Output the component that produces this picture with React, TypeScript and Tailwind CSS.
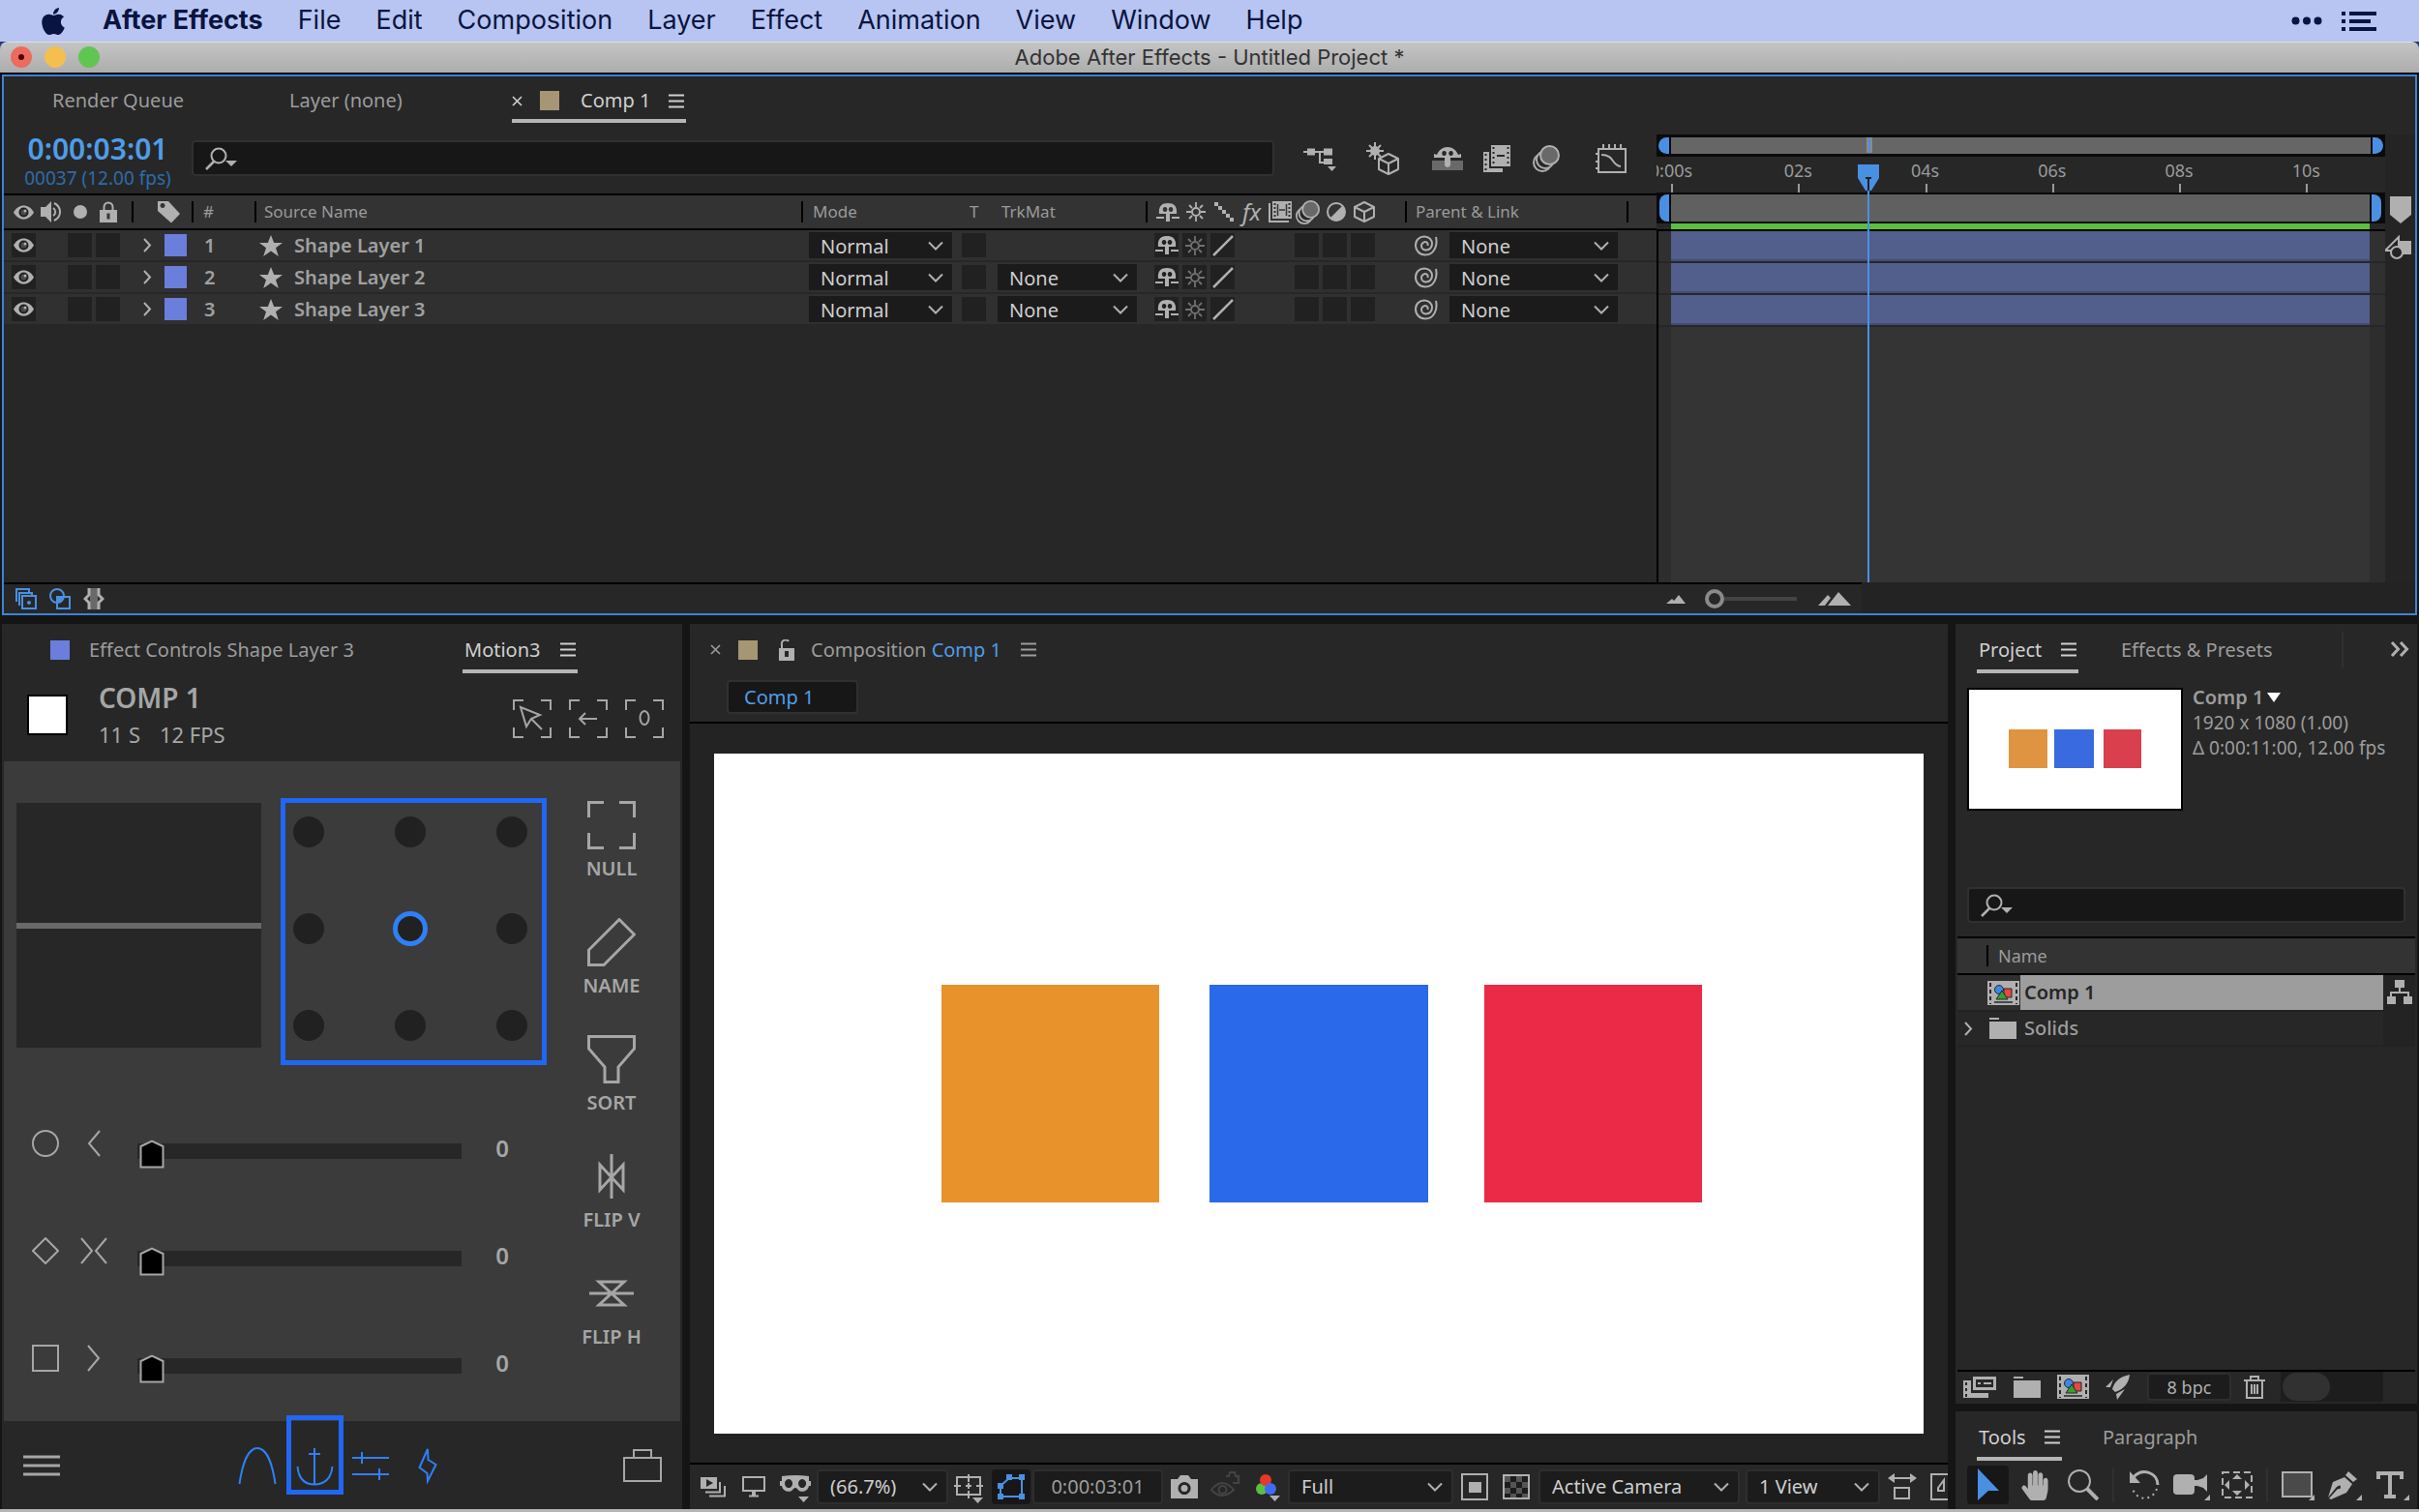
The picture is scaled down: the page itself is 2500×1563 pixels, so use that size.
import type { ReactNode } from 'react';
import { FaApple, FaHandPaper } from 'react-icons/fa';

interface SvgProps {
  w: number;
  h: number;
  className?: string;
  children: ReactNode;
}

function Svg({ w, h, className = '', children }: SvgProps) {
  return (
    <svg
      width={w}
      height={h}
      viewBox={`0 0 ${w} ${h}`}
      fill="none"
      stroke="currentColor"
      strokeWidth="2"
      aria-hidden="true"
      className={`shrink-0 ${className}`}
    >
      {children}
    </svg>
  );
}

/* ---------- icons ---------- */

const Chevron = () => <Svg w={16} h={10}><path d="M1 1.5l7 7 7-7" /></Svg>;
const ChevronRight = () => <Svg w={9} h={15}><path d="M1 1l6 6.5-6 6.5" /></Svg>;
const Burger = () => <Svg w={16} h={15}><path d="M0 1.5h16M0 7.5h16M0 13.5h16" /></Svg>;
const Close = () => <Svg w={11} h={11}><path d="M1 1l9 9M10 1l-9 9" strokeWidth="1.6" /></Svg>;

const Search = () => (
  <Svg w={34} h={24}>
    <circle cx="14" cy="9" r="7.5" />
    <path d="M9 15l-8 8" strokeWidth="2.5" />
    <path d="M21 14h12l-6 6z" fill="currentColor" stroke="none" />
  </Svg>
);

const Eye = () => (
  <Svg w={21} h={17}>
    <path d="M0 8.500C5-1 16-1 21 8.500 16 18 5 18 0 8.500z" fill="currentColor" stroke="none" />
    <circle cx="10.500" cy="8.500" r="5" fill="#212121" stroke="none" />
    <circle cx="10.500" cy="8.500" r="3" fill="#4a4a4a" stroke="none" />
    <circle cx="12" cy="7" r="1.500" fill="currentColor" stroke="none" />
  </Svg>
);

const Speaker = () => (
  <Svg w={24} h={22}>
    <path d="M0 6h5l6-6v22l-6-6H0z" fill="currentColor" stroke="none" />
    <path d="M13 7c3 2 3 6 0 8M14 2c8 4 8 14 0 18" />
  </Svg>
);

const Lock = () => (
  <Svg w={18} h={22}>
    <path d="M4.500 10V6a4.500 4.500 0 0 1 9 0v4" />
    <path d="M0 9h18v13H0z" fill="currentColor" stroke="none" />
    <path d="M9 12.500v6" stroke="#333333" strokeWidth="3" />
  </Svg>
);

const OpenLock = () => (
  <Svg w={18} h={22}>
    <path d="M4 10V5.500a4 4 0 0 1 7-3.500" />
    <path d="M1 9h16v13H1z" fill="currentColor" stroke="none" />
    <path d="M9 12v6" stroke="#272727" strokeWidth="4" />
  </Svg>
);

const Tag = () => (
  <Svg w={24} h={24}>
    <path fillRule="evenodd" d="M0 1h11l12 13-9 9.500L0 11zM5 3a2.500 2.500 0 1 0 .1 0z" fill="currentColor" stroke="none" />
  </Svg>
);

const Star = () => (
  <Svg w={24} h={22}>
    <path d="M12 0l3.200 8H24l-7 5.200 2.800 8.800L12 16.600 4.200 22 7 13.200 0 8h8.800z" fill="currentColor" stroke="none" />
  </Svg>
);

const Shy = () => (
  <Svg w={24} h={21}>
    <path
      fillRule="evenodd"
      d="M3 12C2 4 6 1 12 1s10 3 9 11h-7v8h-4v-8zM9 5a2.300 2.500 0 1 0 .1 0zM15 5a2.300 2.500 0 1 0 .1 0z"
      fill="currentColor"
      stroke="none"
    />
    <path d="M0 16h8M16 16h8" />
  </Svg>
);

const Sun = () => (
  <Svg w={20} h={20}>
    <circle cx="10" cy="10" r="4" />
    <path d="M10 0v5M10 15v5M0 10h5M15 10h5M3 3l3 3M14 14l3 3M17 3l-3 3M6 14l-3 3" strokeWidth="1.800" />
  </Svg>
);

const DottedLine = () => (
  <Svg w={20} h={20}>
    <path d="M0 2h4M4 6h4M8 10h4M12 14h4M16 18h4" strokeWidth="4" />
  </Svg>
);

const Film = () => (
  <Svg w={24} h={22}>
    <path d="M1 2v19h20" />
    <path d="M4 0h20v18H4z" fill="currentColor" stroke="none" />
    <path d="M6.500 2v15M21.500 2v15" stroke="#333333" strokeDasharray="2 2" />
    <path d="M11 9h6M9.500 3v12M18.500 3v12" stroke="#333333" strokeWidth="1.500" />
  </Svg>
);

const Blur = ({ size }: { size: number }) => (
  <svg width={size} height={size} viewBox="0 0 28 28" fill="none" stroke="currentColor" strokeWidth="2" aria-hidden="true">
    <circle cx="10" cy="18" r="9" fill="#272727" />
    <circle cx="13" cy="15" r="9" fill="#272727" />
    <circle cx="17.500" cy="10.500" r="9.500" fill="#696969" />
  </svg>
);

const HalfCircle = () => (
  <Svg w={20} h={20}>
    <circle cx="10" cy="10" r="9" />
    <path d="M16.500 3.500A9 9 0 0 1 3.500 16.500z" fill="currentColor" stroke="none" />
  </Svg>
);

const Cube = () => (
  <Svg w={22} h={22}>
    <path d="M11 1l10 5v10l-10 5-10-5V6zM1 6l10 5 10-5M11 11v10" strokeLinejoin="round" />
  </Svg>
);

const Swirl = () => (
  <Svg w={24} h={22}>
    <path d="M22 2C24 11 20 20.500 11 20.500 5 20.500 1 16 1 10.500 1 5 5 1.500 10 1.500c5 0 8 3.500 8 7.500 0 4-3 6.500-6 6.500-3 0-5-2-5-4.500C7 9 9 7 11 7c2 0 3 1.500 2.500 4" />
  </Svg>
);

const Flow = () => (
  <Svg w={34} h={26}>
    <path d="M0 6h30M17 6v11h6" />
    <path d="M4 2.500h8v7H4zM21 2.500h9v7h-9zM21 13h9v6h-9zM25 21h9l-4.500 5z" fill="currentColor" stroke="none" />
  </Svg>
);

const StarCube = () => (
  <Svg w={34} h={34}>
    <path d="M9 0v18M0 9h18M3 3l12 12M15 3L3 15" />
    <circle cx="9" cy="9" r="5" fill="currentColor" stroke="none" />
    <path d="M23 12l10 5v11l-10 5-10-5V17zM13 17l10 5 10-5M23 22v11" strokeLinejoin="round" />
  </Svg>
);

const ShyAll = () => (
  <Svg w={32} h={26}>
    <path d="M0 15h32v10H0z" fill="#696969" stroke="none" />
    <path
      fillRule="evenodd"
      d="M2 12V8l3 1C7 4 11 1 16 1s9 3 11 8l3-1v4H19v8q-3 4-6 0v-8zM12.500 5a2.300 2.500 0 1 0 .1 0zM19.500 5a2.300 2.500 0 1 0 .1 0z"
      fill="currentColor"
      stroke="none"
    />
  </Svg>
);

const FilmAll = () => (
  <Svg w={28} h={28}>
    <path d="M0 7h6v17h14v4H0z" fill="currentColor" stroke="none" />
    <path d="M8 0h20v22H8z" fill="currentColor" stroke="none" />
    <path d="M10.500 2v19M25.500 2v19M2.500 9v17" stroke="#272727" strokeDasharray="2 3" />
    <path d="M14 11h8" stroke="#272727" />
  </Svg>
);

const Graph = () => (
  <Svg w={32} h={30}>
    <path d="M3 5h28v24H3zM6 11c14 0 10 11 20 12M0 10h3M0 18h3M0 25h3M8 0v5M14 0v5M20 0v5M26 0v5" />
  </Svg>
);

const CompIcon = () => (
  <Svg w={33} h={25}>
    <path d="M0 0h33v25H0z" fill="currentColor" stroke="none" />
    <path d="M3 2v22M30 2v22" stroke="#272727" strokeDasharray="4 3" />
    <path d="M7 22h19" stroke="#272727" strokeWidth="1.500" />
    <path d="M17 8h8v9h-8z" fill="#e8483f" stroke="#272727" strokeWidth="1" />
    <circle cx="12" cy="9" r="4.500" fill="#3f86e8" stroke="#272727" strokeWidth="1" />
    <path d="M9 19l6-9 6 9z" fill="#35a02f" stroke="#272727" strokeWidth="1" />
  </Svg>
);

const Folder = () => (
  <Svg w={28} h={22}>
    <path d="M0 0h10v2H0zM0 4h28v18H0z" fill="currentColor" stroke="none" />
  </Svg>
);

/* ---------- shared pieces ---------- */

function Tab({ children, active = false, className = '' }: { children: ReactNode; active?: boolean; className?: string }) {
  return (
    <button
      type="button"
      className={`flex h-full shrink-0 items-center whitespace-nowrap border-b-4 pt-[6px] ${
        active ? 'border-[#b5b5b5] text-[#d0d0d0]' : 'border-transparent text-[#9c9c9c]'
      } ${className}`}
    >
      {children}
    </button>
  );
}

interface SelectProps {
  label: string;
  value: string;
  className?: string;
}

function Select({ label, value, className = '' }: SelectProps) {
  return (
    <div className={`relative shrink-0 ${className}`}>
      <select aria-label={label} className="h-full w-full appearance-none bg-transparent pl-3 leading-none text-[#cfcfcf]">
        <option>{value}</option>
      </select>
      <span className="pointer-events-none absolute inset-y-0 right-[9px] flex items-center">
        <Chevron />
      </span>
    </div>
  );
}

function SearchBox({ label, className }: { label: string; className: string }) {
  return (
    <div className={`flex h-[37px] items-center rounded border-2 border-[#303030] bg-[#171717] pl-3 ${className}`}>
      <Search />
      <input type="text" aria-label={label} className="min-w-0 flex-1 bg-transparent outline-none" />
    </div>
  );
}

function Cell({ children, blank = false }: { children?: ReactNode; blank?: boolean }) {
  return (
    <span className={`flex h-[25px] w-[25px] shrink-0 items-center justify-center ${blank ? '' : 'bg-[#212121]'}`}>
      {children}
    </span>
  );
}

/* ---------- menu and title ---------- */

const menus = ['File', 'Edit', 'Composition', 'Layer', 'Effect', 'Animation', 'View', 'Window', 'Help'];

function MenuBar() {
  return (
    <nav className="flex h-[43px] items-center gap-9 bg-[#b8c5f2] pl-10 pr-11 font-['Inter',sans-serif] text-[27px] text-[#0a1440]">
      <FaApple className="h-[32px] w-[30px]" />
      <button type="button" className="font-bold">After Effects</button>
      {menus.map((m) => (
        <button type="button" key={m}>{m}</button>
      ))}
      <div className="ml-auto flex items-center gap-5">
        <Svg w={32} h={9}>
          <g fill="currentColor" stroke="none">
            <circle cx="4.500" cy="4.500" r="4" />
            <circle cx="16" cy="4.500" r="4" />
            <circle cx="27.500" cy="4.500" r="4" />
          </g>
        </Svg>
        <Svg w={36} h={20}>
          <path d="M0 2h4M8 2h28M0 10h4M8 10h22M0 18h4M8 18h28" strokeWidth="4" />
        </Svg>
      </div>
    </nav>
  );
}

function TitleBar() {
  return (
    <div className="bg-[#2a3a78]">
      <header className="flex h-8 items-center rounded-t-lg border-t border-[#dedede] bg-linear-to-b from-[#c4c4c4] to-[#adadad] px-[11px] pb-[2px]">
        <div className="flex w-24 gap-[13px]">
          <button type="button" aria-label="Close" className="flex h-[22px] w-[22px] items-center justify-center rounded-full bg-[#ed6a5e]">
            <span className="h-[6px] w-[6px] rounded-full bg-[#4d0000]" />
          </button>
          <button type="button" aria-label="Minimize" className="h-[22px] w-[22px] rounded-full bg-[#f5bf4f]" />
          <button type="button" aria-label="Zoom" className="h-[22px] w-[22px] rounded-full bg-[#61c554]" />
        </div>
        <h1 className="flex-1 text-center font-['Inter',sans-serif] text-[22px] leading-none text-[#333333]">
          Adobe After Effects - Untitled Project *
        </h1>
        <div className="w-24" />
      </header>
    </div>
  );
}

/* ---------- timeline ---------- */

interface Layer {
  id: number;
  name: string;
  trkMat: string | null;
}

const layers: Layer[] = [
  { id: 1, name: 'Shape Layer 1', trkMat: null },
  { id: 2, name: 'Shape Layer 2', trkMat: 'None' },
  { id: 3, name: 'Shape Layer 3', trkMat: 'None' },
];

const ticks = ['0:00s', '02s', '04s', '06s', '08s', '10s'];

function Head({ children, className = '' }: { children?: ReactNode; className?: string }) {
  return (
    <th className={`h-[38px] border-y-2 border-black bg-[#333333] p-0 text-left font-normal ${className}`}>
      <div className="relative flex items-center">{children}</div>
    </th>
  );
}

const Divider = () => <span className="absolute left-0 h-[22px] w-[2px] bg-black" />;

function LayerTable() {
  return (
    <table className="w-full table-fixed border-separate border-spacing-0">
      <colgroup>
        <col className="w-[132px]" />
        <col className="w-[62px]" />
        <col className="w-[65px]" />
        <col />
        <col className="w-[160px]" />
        <col className="w-[35px]" />
        <col className="w-[161px]" />
        <col className="w-[268px]" />
        <col className="w-[229px]" />
        <col className="w-[31px]" />
      </colgroup>
      <thead className="text-[17px] text-[#9a9a9a]">
        <tr>
          <Head>
            <div className="flex gap-1 pl-2 text-[#b0b0b0]">
              <Cell blank><Eye /></Cell>
              <Cell blank><Speaker /></Cell>
              <Cell blank><span className="h-[14px] w-[14px] rounded-full bg-[#b0b0b0]" /></Cell>
              <Cell blank><Lock /></Cell>
            </div>
          </Head>
          <Head>
            <Divider />
            <span className="pl-[27px] text-[#b0b0b0]"><Tag /></span>
          </Head>
          <Head><Divider /><span className="pl-3">#</span></Head>
          <Head><Divider /><span className="pl-[10px]">Source Name</span></Head>
          <Head><Divider /><span className="pl-3">Mode</span></Head>
          <Head><span className="pl-[14px]">T</span></Head>
          <Head><span className="pl-3">TrkMat</span></Head>
          <Head>
            <Divider />
            <div className="flex gap-1 pl-[10px] text-[#b0b0b0]">
              <Cell blank><Shy /></Cell>
              <Cell blank><Sun /></Cell>
              <Cell blank><DottedLine /></Cell>
              <Cell blank><i className="text-[24px] leading-none">fx</i></Cell>
              <Cell blank><Film /></Cell>
              <Cell blank><Blur size={25} /></Cell>
              <Cell blank><HalfCircle /></Cell>
              <Cell blank><Cube /></Cell>
            </div>
          </Head>
          <Head><Divider /><span className="pl-[11px]">Parent &amp; Link</span></Head>
          <Head><Divider /></Head>
        </tr>
      </thead>
      <tbody className="text-[20px] text-[#b0b0b0] [&_td]:h-[33px] [&_td]:border-b-2 [&_td]:border-[#272727] [&_td]:bg-[#303030] [&_td]:p-0">
        {layers.map((layer) => (
          <tr key={layer.id}>
            <td>
              <div className="flex gap-1 pl-2">
                <Cell><Eye /></Cell>
                <Cell blank />
                <Cell />
                <Cell />
              </div>
            </td>
            <td>
              <div className="flex items-center gap-[13px] pl-3">
                <ChevronRight />
                <span className="h-[23px] w-[23px] bg-[#6b7edb]" />
              </div>
            </td>
            <td className="pl-[13px]! font-semibold leading-none text-[#a0a0a0]">{layer.id}</td>
            <td>
              <div className="flex items-center gap-3 pl-[5px] font-semibold leading-none text-[#a0a0a0]">
                <span className="text-[#b0b0b0]"><Star /></span>
                {layer.name}
              </div>
            </td>
            <td className="pl-2!">
              <Select label={`Mode of ${layer.name}`} value="Normal" className="h-[27px] w-[148px] bg-[#1b1b1b]" />
            </td>
            <td className="pl-[6px]!"><Cell /></td>
            <td className="pl-2!">
              {layer.trkMat && (
                <Select label={`Track matte of ${layer.name}`} value={layer.trkMat} className="h-[27px] w-[144px] bg-[#1b1b1b]" />
              )}
            </td>
            <td>
              <div className="flex gap-1 pl-[9px]">
                <Cell><Shy /></Cell>
                <Cell><span className="text-[#707070]"><Sun /></span></Cell>
                <Cell><Svg w={22} h={22}><path d="M1 21L21 1" strokeWidth="2.500" /></Svg></Cell>
                <Cell blank />
                <Cell blank />
                <Cell />
                <Cell />
                <Cell />
              </div>
            </td>
            <td>
              <div className="flex items-center gap-3 pl-[10px]">
                <Swirl />
                <Select label={`Parent of ${layer.name}`} value="None" className="h-[27px] w-[174px] bg-[#1b1b1b]" />
              </div>
            </td>
            <td />
          </tr>
        ))}
      </tbody>
    </table>
  );
}

function TimeGraph() {
  return (
    <div className="flex w-[784px] shrink-0 flex-col pt-[60px]">
      <div className="flex flex-1">
        <div className="relative flex flex-1 flex-col overflow-hidden">
          <div className="flex h-[23px] gap-[2px] bg-[#0a0a0a] px-[2px] py-[3px]">
            <span className="w-[11px] rounded-l-full bg-[#4a90e2]" />
            <span className="flex-1 bg-[#666666]" />
            <span className="w-[11px] rounded-r-full bg-[#4a90e2]" />
          </div>
          <div className="grid h-[37px] grid-cols-[repeat(5,2fr)_1fr] pl-[15px] pr-4 text-[18px] text-[#9a9a9a]">
            {ticks.map((t) => (
              <div key={t} className="flex flex-col justify-between">
                <span className="-ml-10 w-20 text-center leading-7">{t}</span>
                <span className="h-[10px] w-[2px] bg-[#9a9a9a]" />
              </div>
            ))}
          </div>
          <div className="flex h-8 gap-[2px] bg-[#0a0a0a] py-[2px] pl-[3px] pr-[4px]">
            <span className="w-[10px] rounded-l-lg bg-[#4a90e2]" />
            <span className="flex-1 bg-[#606060]" />
            <span className="w-[10px] rounded-r-lg bg-[#4a90e2]" />
          </div>
          <div className="flex h-2 border-b-2 border-black pl-[15px] pr-4">
            <span className="flex-1 bg-[#5abf40]" />
          </div>
          <div className="flex flex-1 flex-col border-l-2 border-black bg-[#303030]">
            {layers.map((l) => (
              <div key={l.id} className="flex h-[33px] border-b-2 border-[#272727] pl-[13px] pr-4">
                <span className="flex-1 border-b-2 border-[#434c78] bg-[#525e8c]" />
              </div>
            ))}
            <div className="flex flex-1 bg-[#2d2d2d] pl-[13px] pr-4">
              <span className="flex-1 bg-[#343434]" />
            </div>
          </div>
          <div className="pointer-events-none absolute inset-y-0 left-[15px] right-4">
            <div className="absolute left-[28%] top-[3px] h-4 w-[6px] border-x-2 border-[#8a8a8a] bg-[#4a90e2]" />
            <div className="absolute bottom-0 left-[28%] top-[31px]">
              <Svg w={22} h={27} className="-ml-[9px]">
                <path d="M0 0h22v14l-8 13H8L0 14z" fill="#4a90e2" stroke="none" />
                <path d="M8 14h6M11 14v13" stroke="#222222" />
              </Svg>
              <div className="ml-[1px] h-full w-[2px] bg-[#4a90e2]" />
            </div>
          </div>
        </div>
        <div className="flex w-[31px] flex-col items-end bg-[#242424] pr-1 text-[#b0b0b0]">
          <Svg w={22} h={28} className="mt-[64px]"><path d="M0 0h22v19l-11 9L0 19z" fill="currentColor" stroke="none" /></Svg>
          <Svg w={28} h={26} className="mt-3">
            <path d="M14 6h14v14H14z" fill="currentColor" stroke="none" />
            <path d="M1 16L15 2v14z" />
            <circle cx="13" cy="18" r="6" fill="#242424" />
          </Svg>
        </div>
      </div>
    </div>
  );
}

function TimelinePanel() {
  return (
    <section className="flex h-[559px] flex-col border-2 border-[#3f82d6] bg-[#272727]">
      <div className="flex flex-1">
        <div className="min-w-0 flex-1">
          <div className="flex h-12 text-[20px]">
            <Tab className="ml-[50px] w-[137px]">Render Queue</Tab>
            <Tab className="ml-[108px] w-[122px]">Layer (none)</Tab>
            <Tab active className="ml-[108px] w-[180px]">
              <Close />
              <span className="ml-[18px] h-5 w-5 bg-[#a69673]" />
              <span className="ml-[22px] w-[91px] text-left">Comp 1</span>
              <Burger />
            </Tab>
          </div>
          <div className="flex h-[73px] text-[#b0b0b0]">
            <div className="w-[194px] pt-[9px] text-center text-[#4f9de8]">
              <div className="text-[30px] font-semibold leading-9">0:00:03:01</div>
              <div className="text-[19px] leading-6 text-[#2c6cab]">00037 (12.00 fps)</div>
            </div>
            <SearchBox label="Search layers" className="mt-[18px] min-w-0 flex-1" />
            <div className="flex h-[73px] w-[395px] items-center pl-[30px]">
              <Flow />
              <span className="ml-[31px]"><StarCube /></span>
              <span className="ml-[34px]"><ShyAll /></span>
              <span className="ml-[21px]"><FilmAll /></span>
              <span className="ml-[23px]"><Blur size={28} /></span>
              <span className="ml-[37px]"><Graph /></span>
            </div>
          </div>
          <LayerTable />
        </div>
        <TimeGraph />
      </div>
      <footer className="flex h-8">
        <div className="flex flex-1 items-center border-t-2 border-black pl-3 text-[#4a90e2]">
          <Svg w={22} h={22}>
            <path d="M1 14V1h13v4M4 18V5h13v3M7 8h14v13H7z" />
            <circle cx="14" cy="15" r="2" fill="currentColor" stroke="none" />
          </Svg>
          <Svg w={22} h={22} className="ml-[13px]">
            <circle cx="8" cy="8" r="7" />
            <path d="M8 9h13v12H8z" />
            <path d="M8 9h7a7 7 0 0 1-7 6z" fill="currentColor" stroke="none" />
          </Svg>
          <Svg w={22} h={22} className="ml-[13px] text-[#b0b0b0]">
            <path d="M7 0h8v22H7z" fill="#696969" stroke="none" />
            <path d="M6 0v7l-4 4 4 4v7M16 0v7l4 4-4 4v7" strokeWidth="3" />
          </Svg>
        </div>
        <div className="flex w-[212px] items-center border-t-2 border-black pl-[10px] text-[#b0b0b0]">
          <Svg w={20} h={9}><path d="M0 9l6-5 2 2 5-6 7 9z" fill="currentColor" stroke="none" /></Svg>
          <div className="relative ml-5 flex h-5 w-[95px] items-center">
            <span className="h-[20px] w-[20px] shrink-0 rounded-full border-4 border-[#8a8a8a]" />
            <span className="h-1 flex-1 bg-[#444444]" />
            <input type="range" aria-label="Timeline zoom" defaultValue={0} className="absolute inset-0 w-full opacity-0" />
          </div>
          <Svg w={34} h={14} className="ml-[22px]"><path d="M0 14l10-11 3 3-6 8zM10 14L21 0l13 14z" fill="currentColor" stroke="none" /></Svg>
        </div>
        <div className="w-[572px] bg-[#232323]" />
      </footer>
    </section>
  );
}

/* ---------- motion panel ---------- */

const Bracket = ({ children }: { children: ReactNode }) => (
  <Svg w={40} h={40}>
    <path d="M1 11V1h10M29 1h10v10M39 29v10H29M11 39H1V29" />
    {children}
  </Svg>
);

const actions = [
  { label: 'NULL', icon: <path d="M1.500 17V1.500H17M33 1.500h15.500V17M48.500 33v15.500H33M17 48.500H1.500V33" /> },
  { label: 'NAME', icon: <path d="M33 1.500L48.500 17 17 48.500H1.500V33z" /> },
  { label: 'SORT', icon: <path d="M1.500 1.500h47V14L32 33v15.500H18V33L1.500 14z" /> },
  { label: 'FLIP V', icon: <path d="M25 2v46M13 13v26l24-26v26z" /> },
  { label: 'FLIP H', icon: <path d="M2 25h46M12 13h26L12 37h26z" /> },
];

const sliders = [
  { label: 'Ease in', shape: <circle cx="14" cy="14" r="13" />, arrow: <path d="M20 1L9 14l11 13" /> },
  { label: 'Ease both', shape: <path d="M14 1l13 13-13 13L1 14z" />, arrow: <path d="M1 1l11 13L1 27M27 1L16 14l11 13" /> },
  { label: 'Ease out', shape: <path d="M1 1h26v26H1z" />, arrow: <path d="M8 1l11 13L8 27" /> },
];

function MotionPanel() {
  return (
    <section className="flex w-[703px] shrink-0 flex-col bg-[#272727]">
      <div className="flex h-[51px] text-[20px]">
        <Tab className="ml-[50px] w-[426px]">
          <span className="mr-5 h-5 w-5 bg-[#6b7edb]" />
          Effect Controls Shape Layer 3
        </Tab>
        <Tab active className="w-[119px] justify-between px-[2px]">
          Motion3
          <Burger />
        </Tab>
      </div>
      <div className="flex h-[91px] items-center pb-[6px] pl-[26px] pr-[19px] text-[#a6a6a6]">
        <span className="h-[42px] w-[42px] border-2 border-black bg-white" />
        <div className="ml-[32px] flex-1">
          <h2 className="text-[28px] font-semibold leading-10">COMP 1</h2>
          <p className="flex gap-5 text-[22px] leading-9"><span>11 S</span><span>12 FPS</span></p>
        </div>
        <div className="flex gap-[18px] pt-2">
          <button type="button" aria-label="Select"><Bracket><path d="M8 8l6 20 5-8 9-4zM19 20l11 11" /></Bracket></button>
          <button type="button" aria-label="Back"><Bracket><path d="M11 20h18M17 14l-6 6 6 6" /></Bracket></button>
          <button type="button" aria-label="Zero"><Bracket><ellipse cx="20" cy="19" rx="4.500" ry="7" /></Bracket></button>
        </div>
      </div>
      <div className="mx-[2px] flex flex-1 bg-[#3b3b3b] text-[#a6a6a6]">
        <div className="flex-1 pt-[38px]">
          <div className="flex gap-5 pl-[13px]">
            <div className="mt-[5px] flex h-[253px] w-[253px] items-center bg-[#272727]">
              <span className="h-[6px] w-full bg-[#696969]" />
            </div>
            <div className="grid h-[276px] w-[275px] shrink-0 grid-cols-3 content-between border-[5px] border-[#2266f5] pb-5 pl-2 pr-[15px] pt-[14px]">
              {[0, 1, 2, 3, 4, 5, 6, 7, 8].map((i) => (
                <button
                  type="button"
                  key={i}
                  aria-label={`Anchor point ${i + 1}`}
                  className={`self-center rounded-full bg-[#212121] ${
                    i % 3 === 0 ? 'justify-self-start' : i % 3 === 1 ? 'justify-self-center' : 'justify-self-end'
                  } ${i === 4 ? 'h-9 w-9 border-[5px] border-[#2f80f7]' : 'h-8 w-8'}`}
                />
              ))}
            </div>
          </div>
          <div className="pt-[30px]">
            {sliders.map((s) => (
              <div key={s.label} className="flex h-[111px] items-center pl-[29px]">
                <Svg w={28} h={28} className="mb-[10px]">{s.shape}</Svg>
                <Svg w={28} h={28} className="mb-[10px] ml-[22px]">{s.arrow}</Svg>
                <div className="relative ml-[31px] mt-[6px] h-4 w-[335px] bg-[#272727]">
                  <Svg w={26} h={30} className="absolute -top-1 left-[2px]">
                    <path d="M1.500 7L13 1.500 24.500 7v21.500h-23z" fill="#000000" />
                  </Svg>
                  <input type="range" aria-label={s.label} defaultValue={0} className="absolute inset-0 w-full opacity-0" />
                </div>
                <span className="ml-[22px] w-10 text-center text-[24px] font-semibold">0</span>
              </div>
            ))}
          </div>
        </div>
        <div className="flex w-[138px] shrink-0 flex-col pr-1 pt-[41px]">
          {actions.map((a) => (
            <button type="button" key={a.label} className="flex h-[121px] flex-col items-center text-[20px] font-semibold">
              <Svg w={50} h={50}><g strokeWidth="3">{a.icon}</g></Svg>
              <span className="mt-[6px] leading-7">{a.label}</span>
            </button>
          ))}
        </div>
      </div>
      <footer className="flex h-[91px] items-center pl-[22px] pr-[21px] text-[#2f80f7]">
        <button type="button" aria-label="Menu" className="text-[#a6a6a6]">
          <Svg w={38} h={22}><path d="M0 2h38M0 11h38M0 20h38" strokeWidth="3" /></Svg>
        </button>
        <button type="button" aria-label="Curve" className="ml-[184px]">
          <Svg w={40} h={40}><path d="M1.500 39C5 14 12 2 20 2s15 12 18.500 37" /></Svg>
        </button>
        <button type="button" aria-label="Anchor" className="-mt-[6px] ml-[10px] flex h-[82px] w-[59px] items-end justify-center self-start border-[5px] border-[#2266f5] pb-1">
          <Svg w={40} h={40}><path d="M19 1v38M13 7h12M1.500 20c1 12 7 18.500 17.500 18.500S36.500 32 37.500 20" /></Svg>
        </button>
        <button type="button" aria-label="Adjust" className="ml-[9px]">
          <Svg w={38} h={30}><path d="M0 7h38M10 1v12M0 24h38M28 18v12" /></Svg>
        </button>
        <button type="button" aria-label="Quick actions" className="ml-[30px]">
          <Svg w={20} h={40}><path d="M10 3L1.500 22l8 6 .5 8 8.500-17-8-5z" /></Svg>
        </button>
        <button type="button" aria-label="Toolkit" className="ml-auto text-[#a6a6a6]">
          <Svg w={40} h={34}><path d="M1 9h38v24H1zM11 9V1h18v8" /></Svg>
        </button>
      </footer>
    </section>
  );
}

/* ---------- viewer ---------- */

const Caret = () => <path d="M0 0h11l-5.500 6z" fill="currentColor" stroke="none" />;

function Viewer() {
  return (
    <section className="flex min-w-0 flex-1 flex-col overflow-hidden bg-[#272727] text-[20px] text-[#9c9c9c]">
      <div className="flex h-[51px] items-center pl-[21px] pt-[2px]">
        <Close />
        <span className="ml-[18px] h-5 w-5 bg-[#a69673]" />
        <span className="ml-[21px] text-[#b0b0b0]"><OpenLock /></span>
        <h2 className="ml-4 w-[217px] whitespace-nowrap">
          Composition <span className="text-[#4f9de8]">Comp 1</span>
        </h2>
        <Burger />
      </div>
      <div className="flex h-[52px] border-b-2 border-black pl-[38px] pt-[7px]">
        <button type="button" className="h-[35px] w-[136px] rounded border-2 border-[#303030] bg-[#171717] pl-4 text-left leading-none text-[#4f9de8]">
          Comp 1
        </button>
      </div>
      <div className="flex flex-1 items-center bg-[#232323] px-[25px]">
        <svg viewBox="0 0 1250 703" className="w-full bg-white" role="img" aria-label="Composition preview">
          <path d="M235 239h225v225H235z" fill="#e8922b" />
          <path d="M512 239h226v225H512z" fill="#2a69ea" />
          <path d="M796 239h225v225H796z" fill="#ea2a46" />
        </svg>
      </div>
      <footer className="flex h-[48px] items-center border-t-2 border-black text-[#b0b0b0]">
        <Svg w={26} h={22} className="ml-[11px]">
          <path fillRule="evenodd" d="M0 1h17v12H0zM6 3v8l7-4z" fill="currentColor" stroke="none" />
          <path d="M5 16.500h15V6M9 20.500h16V10" />
        </Svg>
        <Svg w={26} h={22} className="ml-4"><path d="M2 1h22v14H2zM8 20.500h10" /><path d="M13 15v5" strokeWidth="4" /></Svg>
        <Svg w={32} h={28} className="ml-[14px] mt-1">
          <path
            fillRule="evenodd"
            d="M0 6h2V1q14-2 28 0v5h2v5h-2c-1 6-9 8-12 3q-2-2-4 0C11 19 3 17 2 11H0zM9 4a4 4.500 0 1 0 .1 0zM23 4a4 4.500 0 1 0 .1 0z"
            fill="currentColor"
            stroke="none"
          />
          <g transform="translate(19 22)"><Caret /></g>
        </Svg>
        <Select label="Magnification" value="(66.7%)" className="ml-[6px] h-9 w-[136px] rounded border-2 border-[#2e2e2e] bg-[#1c1c1c]" />
        <Svg w={30} h={30} className="ml-[6px] mt-1">
          <path d="M3 3h24v18H3zM15 0v8M15 17v8M0 12h7M23 12h7M12 12h6M15 9v6" />
          <g transform="translate(19 24)"><Caret /></g>
        </Svg>
        <button type="button" aria-label="Mask visibility" className="ml-[9px] flex h-9 w-10 shrink-0 items-center justify-center rounded bg-[#171717] text-[#4a90e2]">
          <Svg w={28} h={26}>
            <path d="M3 22V12l9-8h13v19H3z" />
            <path d="M0 20h6v6H0zM22 20h6v6h-6zM22 0h6v6h-6zM9 0h6v6H9zM0 9h6v6H0z" fill="currentColor" stroke="none" />
          </Svg>
        </button>
        <button type="button" className="ml-[2px] h-9 w-[135px] shrink-0 rounded border-2 border-[#2e2e2e] bg-[#1c1c1c] leading-none text-[#9c9c9c]">
          0:00:03:01
        </button>
        <Svg w={28} h={24} className="ml-[8px]">
          <path fillRule="evenodd" d="M0 4h7l3-4h8l3 4h7v20H0zM14 7a6.500 6.500 0 1 0 .1 0z" fill="currentColor" stroke="none" />
          <circle cx="14" cy="13.500" r="3.500" fill="currentColor" stroke="none" />
        </Svg>
        <Svg w={30} h={28} className="mb-1 ml-[13px] text-[#444444]">
          <path d="M1 19q11-14 23 0-12 12-23 0zM16 5h3l1-4h5l1 4h3v7h-6" />
          <circle cx="12.500" cy="19" r="4" />
        </Svg>
        <Svg w={28} h={30} className="ml-4">
          <g stroke="none">
            <circle cx="7" cy="17" r="6" fill="#5abf40" />
            <circle cx="11" cy="8" r="6" fill="#e8382c" />
            <circle cx="16" cy="17" r="6" fill="#3f6bf0" />
            <g transform="translate(15 24)"><Caret /></g>
          </g>
        </Svg>
        <Select label="Resolution" value="Full" className="ml-[6px] h-9 w-[171px] rounded border-2 border-[#2e2e2e] bg-[#1c1c1c]" />
        <Svg w={28} h={28} className="ml-2">
          <path d="M1 1h26v26H1z" />
          <path d="M8 9h13v11H8z" fill="currentColor" stroke="none" />
        </Svg>
        <Svg w={28} h={28} className="ml-[15px]">
          <path d="M1 2h26v24H1z" fill="#555555" />
          <path d="M8 3h6v6H8zM20 3h6v6h-6zM2 9h6v6H2zM14 9h6v6h-6zM8 15h6v6H8zM20 15h6v6h-6zM2 21h6v4H2zM14 21h6v4h-6z" fill="#1c1c1c" stroke="none" />
        </Svg>
        <Select label="Camera" value="Active Camera" className="ml-[9px] h-9 w-[208px] rounded border-2 border-[#2e2e2e] bg-[#1c1c1c]" />
        <Select label="View layout" value="1 View" className="ml-[6px] h-9 w-[139px] rounded border-2 border-[#2e2e2e] bg-[#1c1c1c]" />
        <Svg w={30} h={28} className="ml-2">
          <path d="M3 5h24M7 15h15v11H7z" />
          <path d="M0 5l7-5v10zM30 5l-7-5v10z" fill="currentColor" stroke="none" />
        </Svg>
        <Svg w={28} h={28} className="ml-[14px]"><path d="M1 1h26v26H1zM8 18h6V7l-6 8z" /></Svg>
      </footer>
    </section>
  );
}

/* ---------- project ---------- */

function ProjectPanel() {
  return (
    <section className="flex flex-1 flex-col bg-[#272727]">
      <div className="flex h-[51px] text-[20px]">
        <Tab active className="ml-[22px] w-[105px] justify-between px-[2px]">
          Project
          <Burger />
        </Tab>
        <Tab className="ml-11 w-[158px]">Effects &amp; Presets</Tab>
        <span className="ml-[70px] mt-2 h-[38px] w-[2px] bg-[#303030]" />
        <button type="button" aria-label="More panels" className="ml-auto mr-2 text-[#b0b0b0]">
          <Svg w={20} h={16}><path d="M2 1l6.500 7L2 15M11 1l6.500 7-6.500 7" strokeWidth="3" /></Svg>
        </button>
      </div>
      <div className="flex pl-3 pt-[15px] text-[#9c9c9c]">
        <svg viewBox="0 0 219 123" className="h-[127px] w-[223px] border-2 border-black bg-white" role="img" aria-label="Comp 1 thumbnail">
          <path d="M41 41h40v40H41z" fill="#de9441" />
          <path d="M88 41h41v40H88z" fill="#396ae0" />
          <path d="M139 41h39v40h-39z" fill="#da3f4e" />
        </svg>
        <div className="-mt-[3px] whitespace-nowrap pl-[10px] text-[19px] leading-[26px]">
          <p className="flex items-center gap-1 text-[20px] font-semibold">
            Comp 1
            <Svg w={14} h={10}><path d="M0 0h14L7 10z" fill="#ffffff" stroke="none" /></Svg>
          </p>
          <p>1920 x 1080 (1.00)</p>
          <p>Δ 0:00:11:00, 12.00 fps</p>
        </div>
      </div>
      <SearchBox label="Search project" className="ml-3 mr-3 mt-[79px] text-[#b0b0b0]" />
      <div className="mx-[2px] mt-[14px] flex-1">
        <table className="w-full table-fixed border-separate border-spacing-0 text-[20px] text-[#9c9c9c]">
          <colgroup>
            <col className="w-[30px]" />
            <col />
            <col className="w-[33px]" />
          </colgroup>
          <thead>
            <tr>
              <th className="h-10 border-y-2 border-black bg-[#333333] p-0" />
              <th colSpan={2} className="h-10 border-y-2 border-black bg-[#333333] p-0 text-left text-[18px] font-normal">
                <div className="flex h-[22px] items-center border-l-2 border-black pl-[10px] leading-none">Name</div>
              </th>
            </tr>
          </thead>
          <tbody>
            <tr>
              <td className="h-[36px] bg-[#2f2f2f] p-0" />
              <td className="h-[36px] p-0">
                <div className="flex h-[36px] items-stretch">
                  <span className="flex w-[35px] items-center bg-[#2f2f2f] pl-[1px] text-[#b0b0b0]"><CompIcon /></span>
                  <span className="flex flex-1 items-center bg-[#9d9d9d] pl-1 font-semibold leading-none text-[#262626]">Comp 1</span>
                </div>
              </td>
              <td className="bg-[#232323] p-0 pl-1 text-[#b0b0b0]">
                <Svg w={26} h={26}>
                  <path d="M13 6v8M4 18v-5h18v5" />
                  <path d="M8 0h10v8H8zM0 17h9v8H0zM17 17h9v8h-9z" fill="currentColor" stroke="none" />
                </Svg>
              </td>
            </tr>
            <tr>
              <td className="h-[38px] border-y-2 border-[#222222] p-0 pl-[7px] text-[#b0b0b0]"><ChevronRight /></td>
              <td className="border-y-2 border-[#222222] p-0">
                <div className="flex items-center gap-2 pl-[3px] font-medium leading-none">
                  <span className="text-[#b0b0b0]"><Folder /></span>
                  Solids
                </div>
              </td>
              <td className="bg-[#232323] p-0" />
            </tr>
          </tbody>
        </table>
      </div>
      <footer className="mx-[2px] flex h-[35px] items-center border-t-2 border-black pb-[2px] pl-[6px] text-[#b0b0b0]">
        <Svg w={34} h={24}>
          <path fillRule="evenodd" d="M10 1h24v14H10zM13 4v8h18V4z" fill="currentColor" stroke="none" />
          <path d="M15 8h3M21 8h8" />
          <path d="M0 5h8v13h18v5H0z" fill="currentColor" stroke="none" />
          <path d="M3 7v15" stroke="#272727" strokeDasharray="3 3" />
        </Svg>
        <span className="ml-[18px]"><Folder /></span>
        <span className="ml-[17px]"><CompIcon /></span>
        <Svg w={26} h={26} className="ml-[17px]">
          <path d="M25 0C15 2 9 7 7 15l3 3C19 15 24 9 25 0zM8 5L0 13h5zM20 15l-8 11-1-6z" fill="currentColor" stroke="none" />
        </Svg>
        <button type="button" className="ml-[17px] h-[29px] w-[87px] rounded border-2 border-[#2e2e2e] bg-[#1c1c1c] text-[18px] leading-none">8 bpc</button>
        <Svg w={22} h={24} className="ml-[13px]">
          <path d="M0 5h22M7 5V1h8v4M3 5v18h16V5M8 9v10M11 9v10M14 9v10" />
        </Svg>
        <div className="ml-[16px] flex h-full w-[106px] items-center bg-[#1d1d1d] px-[2px]">
          <span className="h-[29px] w-[49px] rounded-full bg-[#313131]" />
        </div>
      </footer>
    </section>
  );
}

function ToolsPanel() {
  return (
    <section className="h-[101px] bg-[#272727] text-[20px]">
      <div className="flex h-[51px]">
        <Tab active className="ml-[22px] w-[88px] justify-between px-[2px]">
          Tools
          <Burger />
        </Tab>
        <Tab className="ml-[42px]">Paragraph</Tab>
      </div>
      <div className="flex h-[50px] items-center pl-3 text-[#b0b0b0]">
        <button type="button" aria-label="Selection" className="flex h-10 w-[43px] items-center justify-center rounded bg-[#171717]">
          <Svg w={24} h={34}><path d="M1 0l22 23H12L1 33z" fill="#4a90e2" stroke="none" /></Svg>
        </button>
        <button type="button" aria-label="Hand" className="ml-3"><FaHandPaper className="h-[31px] w-[30px]" /></button>
        <button type="button" aria-label="Zoom" className="ml-[19px]">
          <Svg w={32} h={32}><circle cx="12" cy="12" r="11" /><path d="M20 20l11 11" strokeWidth="4" /></Svg>
        </button>
        <span className="ml-[14px] h-9 w-[2px] bg-[#303030]" />
        <button type="button" aria-label="Rotate" className="ml-4">
          <Svg w={31} h={32}>
            <path d="M4 8C13-2 29 3 29 16" strokeWidth="3" />
            <path d="M0 2v12h11z" fill="currentColor" stroke="none" />
            <path d="M28 20C24 32 8 34 3 20" strokeDasharray="2 4" />
          </Svg>
        </button>
        <button type="button" aria-label="Camera" className="ml-[14px]">
          <Svg w={38} h={32}>
            <rect x="0" y="5" width="22" height="21" rx="4" fill="currentColor" stroke="none" />
            <path d="M22 11h3l6-2 4-4v18l-4-4-6-2h-3zM38 26v6h-6z" fill="currentColor" stroke="none" />
          </Svg>
        </button>
        <button type="button" aria-label="Pan behind" className="ml-3">
          <Svg w={32} h={28}>
            <path d="M1 1h30v26H1z" strokeDasharray="7 4" />
            <path d="M16 3l5 5H11zM16 25l5-5H11zM3 14l5-5v10zM29 14l-5-5v10z" fill="currentColor" stroke="none" />
          </Svg>
        </button>
        <span className="ml-[14px] h-9 w-[2px] bg-[#303030]" />
        <button type="button" aria-label="Rectangle" className="ml-[14px]">
          <Svg w={34} h={32}>
            <path d="M1 3h30v25H1z" fill="#4a4a4a" />
            <path d="M34 26v6h-6z" fill="currentColor" stroke="none" />
          </Svg>
        </button>
        <button type="button" aria-label="Pen" className="ml-[14px]">
          <Svg w={35} h={32}>
            <path d="M21 2l9 8-4 3-8-7zM17 8l8 7-6 9L3 31l-2-1 9-10q3 1 3-2t-4 0L0 29 5 13z" fill="currentColor" stroke="none" />
            <path d="M35 26v6h-6z" fill="currentColor" stroke="none" />
          </Svg>
        </button>
        <button type="button" aria-label="Type" className="ml-[15px]">
          <Svg w={34} h={32}>
            <path d="M2 10V4h24v6M14 4v24M8 28h12" strokeWidth="4" />
            <path d="M34 26v6h-6z" fill="currentColor" stroke="none" />
          </Svg>
        </button>
      </div>
    </section>
  );
}

export default function App() {
  return (
    <div className="flex min-h-screen flex-col border-b-3 border-[#b5b5b5] bg-[#151515] font-['Noto_Sans',sans-serif]">
      <MenuBar />
      <TitleBar />
      <main className="flex flex-1 flex-col gap-[9px] border-t-2 border-black px-[2px]">
        <TimelinePanel />
        <div className="flex flex-1 gap-2">
          <MotionPanel />
          <Viewer />
          <aside className="flex w-[477px] shrink-0 flex-col gap-2 overflow-hidden">
            <ProjectPanel />
            <ToolsPanel />
          </aside>
        </div>
      </main>
    </div>
  );
}
